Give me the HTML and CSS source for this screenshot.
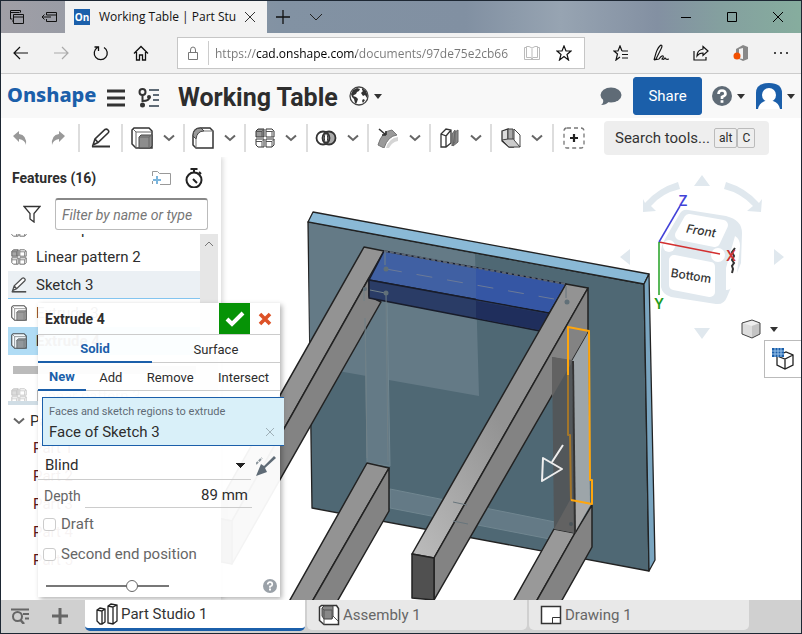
FILE: index.html
```
<!DOCTYPE html>
<html lang="en">
<head>
    <meta charset="UTF-8">
    <meta name="viewport" content="width=device-width, initial-scale=1.0">
    <title>Working Table | Part Studio 1</title>
    <link rel="stylesheet" href="styles.css">
</head>
<body>

    <!-- Shared icons -->
    <svg class="sprites" aria-hidden="true">
        <symbol id="chevron" viewBox="0 0 12 8"><path d="M1 1.500l5 4.500 5-4.500" fill="none" stroke="#666" stroke-width="2"/></symbol>
        <symbol id="caret" viewBox="0 0 8 5"><path d="M0 0h8L4 5z" fill="#333"/></symbol>
        <symbol id="extrude" viewBox="0 0 22 22">
            <path d="M1 3l2-2h15l3 3v17H5l-4-4z" fill="#fff" stroke="#333" stroke-width="1.500"/>
            <path d="M2 2l3 3h16M5 5v16" fill="none" stroke="#666"/>
            <path d="M8 10l2-2h11v11l-2 2H8z" fill="#8d8d8d" stroke="#444"/>
            <path d="M8 10h10v11M18 10l3-2" fill="none" stroke="#666"/>
        </symbol>
        <symbol id="pattern" viewBox="0 0 20 20">
            <path d="M1 3l2-2h6v8H1z" fill="#999" stroke="#333"/>
            <path d="M11 1h6l2 2v6h-8zM1 11h8v8H3l-2-2zM11 11h8v6l-2 2h-6z" fill="#fff" stroke="#333"/>
            <path d="M1 3.500h6V9M7 3.500L9 1M11 3.500h6V9M17 3.500l2-1M1 13.500h6V19M7 13.500l2-2M11 13.500h6V19M17 13.500l2-2" fill="none" stroke="#555"/>
        </symbol>
        <symbol id="pencil" viewBox="0 0 20 20">
            <path d="M2 17l2-6L14 1.500q1.500-1 3 .5t0 3L7 14.500zM4 11l3 3.500" fill="#fff" stroke="#333" stroke-width="1.600"/>
            <path d="M1 18.500h18" stroke="#333" stroke-width="2"/>
        </symbol>
    </svg>

    <div class="window">

        <!-- Browser tabs -->
        <div class="titlebar">
            <div class="tab-tools">
                <svg width="16" height="16" viewBox="0 0 16 16"><path d="M3.500 10H1.500V1.500h10v2M4.500 12H3M1.500 3.500h9M4.500 5.500h10v9h-10zM4.500 8h10" fill="none" stroke="#111"/></svg>
                <svg width="16" height="14" viewBox="0 0 16 14"><path d="M5.500 5V2.500h10v9h-10V9M5.500 5h10M10 7H1M3.500 4.500L1 7l2.500 2.500" fill="none" stroke="#111"/></svg>
            </div>
            <div class="browser-tab">
                <span class="favicon">On</span>
                <span class="browser-tab-title">Working Table | Part Stu</span>
                <button class="plain" aria-label="Close tab"><svg width="12" height="12" viewBox="0 0 12 12"><path d="M1 1l10 10M11 1L1 11" stroke="#333"/></svg></button>
            </div>
            <button class="plain new-tab" aria-label="New tab"><svg width="14" height="14" viewBox="0 0 14 14"><path d="M7 0v14M0 7h14" stroke="#111" stroke-width="1.300"/></svg></button>
            <button class="plain" aria-label="Tab list"><svg width="14" height="8" viewBox="0 0 14 8"><path d="M1 1l6 6 6-6" fill="none" stroke="#222"/></svg></button>
            <div class="window-buttons">
                <button class="plain" aria-label="Minimize"><svg width="12" height="12" viewBox="0 0 12 12"><path d="M1 6.500h10" stroke="#000"/></svg></button>
                <button class="plain" aria-label="Maximize"><svg width="12" height="12" viewBox="0 0 12 12"><path d="M1.500 1.500h9v9h-9z" fill="none" stroke="#000"/></svg></button>
                <button class="plain" aria-label="Close"><svg width="12" height="12" viewBox="0 0 12 12"><path d="M1 1l10 10M11 1L1 11" stroke="#000"/></svg></button>
            </div>
        </div>

        <!-- Address bar -->
        <div class="addressbar">
            <button class="plain nav" aria-label="Back"><svg width="16" height="14" viewBox="0 0 16 14"><path d="M15 7H1M7 1L1 7l6 6" fill="none" stroke="#111" stroke-width="1.200"/></svg></button>
            <button class="plain nav" aria-label="Forward"><svg width="16" height="14" viewBox="0 0 16 14"><path d="M1 7h14M9 1l6 6-6 6" fill="none" stroke="#aaa" stroke-width="1.200"/></svg></button>
            <button class="plain nav" aria-label="Refresh"><svg width="16" height="16" viewBox="0 0 16 16"><path d="M4.500 2.500a6.500 6.500 0 1 0 6.500 0M1.500 2h4v4" fill="none" stroke="#111" stroke-width="1.300"/></svg></button>
            <button class="plain nav" aria-label="Home"><svg width="16" height="16" viewBox="0 0 16 16"><path d="M1 8.500L8 1.500l7 7M3.500 7v8h3v-5h3v5h3V7" fill="none" stroke="#111" stroke-width="1.300"/></svg></button>
            <div class="url">
                <svg width="12" height="14" viewBox="0 0 12 14"><path d="M1.500 6.500h9v7h-9zM3.500 6.500V4q0-3 2.500-3t2.500 3v2.500" fill="none" stroke="#777"/></svg>
                <input type="text" aria-label="Address" value="https://cad.onshape.com/documents/97de75e2cb66">
                <svg width="16" height="14" viewBox="0 0 16 14"><path d="M8 2.500v11M5 .5H2.500v11H7l1 1.500 1-1.500h4.500V.5H11L8 2 5 .5zM2.500 1.500h-2v12h15v-12h-2" fill="none" stroke="#bbb"/></svg>
                <svg width="16" height="16" viewBox="0 0 16 16"><path d="M8 1l2 5h5l-4 3.500 1.500 5.500L8 11.500 3.500 15 5 9.500 1 6h5z" fill="none" stroke="#111" stroke-width="1.200"/></svg>
            </div>
            <div class="browser-actions">
                <svg width="16" height="16" viewBox="0 0 16 16"><path d="M9 6L7 1 5 6H1l3.500 3L3 15l4-3M9 6h6M9 9.500h6M9 13h6" fill="none" stroke="#111" stroke-width="1.200"/></svg>
                <svg width="16" height="18" viewBox="0 0 16 18"><path d="M1 16L3 9q2-6 5-8 2 0 0 4L3 15l-2 1 5-1q3-4 4-3t-1 3q2 1 3-1 1 2 4 1" fill="none" stroke="#111" stroke-width="1.100"/></svg>
                <svg width="16" height="16" viewBox="0 0 16 16"><path d="M1 6v9h12v-3M10 1.500L15 6l-5 4.500V8q-4 0-6 3 0-6 6-7z" fill="none" stroke="#111" stroke-width="1.200"/></svg>
                <svg width="16" height="18" viewBox="0 0 16 18"><path d="M3 5l7-4 5 2v12l-5 2-6-3 6 1V4L6 5v5H3z" fill="#888"/><circle cx="4" cy="12" r="3.500" fill="#f25000"/></svg>
                <svg width="16" height="4" viewBox="0 0 16 4"><path d="M1 2h2M7 2h2M13 2h2" stroke="#111" stroke-width="1.600"/></svg>
            </div>
        </div>

        <!-- Document header -->
        <header class="header">
            <a href="#" class="logo">Onshape</a>
            <button class="plain menu" aria-label="Menu"><svg width="18" height="18" viewBox="0 0 18 18"><path d="M0 2h18M0 9h18M0 16h18" stroke="#333" stroke-width="3"/></svg></button>
            <button class="plain versions" aria-label="Versions"><svg width="22" height="20" viewBox="0 0 22 20"><g fill="none" stroke="#333" stroke-width="2"><circle cx="4.500" cy="4" r="3"/><path d="M4.500 7v7M4.500 13q7 0 7-4"/></g><circle cx="4.500" cy="17" r="2.500" fill="#333"/><circle cx="11" cy="9" r="2" fill="#333"/><path d="M11 2h10M15 7h6M15 12h6M11 18h10" stroke="#5f6b76" stroke-width="2"/></svg></button>
            <h1>Working Table</h1>
            <svg width="20" height="20" viewBox="0 0 20 20"><circle cx="10" cy="10" r="9" fill="#fff" stroke="#444" stroke-width="1.300"/><path d="M4 4l4-2 3 1-1 2-2 1-1 2-2 1-1 1 3 1 2 2-1 3-1 2-1-1-1-4-2-2-1-3zM13 2l4 3 1.500 4-.5 3-2-3-2 1-2-3 2-2-1-1zM14 13l2 1-2 3-1-2z" fill="#333"/></svg>
            <svg class="caret" width="8" height="5"><use href="#caret"/></svg>
            <div class="header-right">
                <svg width="22" height="20" viewBox="0 0 22 20"><ellipse cx="11" cy="9" rx="10.500" ry="7.500" fill="#5f6b76"/><path d="M3 13q1 4-2 6 6 0 8-4z" fill="#5f6b76"/></svg>
                <button class="share">Share</button>
                <button class="plain help" aria-label="Help"><svg width="20" height="20" viewBox="0 0 20 20"><circle cx="10" cy="10" r="10" fill="#5f6b76"/><path d="M6.500 8q0-3.500 3.500-3.500T13.500 8Q13.500 9.500 10 11v2" fill="none" stroke="#fff" stroke-width="2.600"/><path d="M8.600 14.200h2.800v2.600H8.600z" fill="#fff"/></svg><svg width="8" height="5"><use href="#caret"/></svg></button>
                <button class="plain account" aria-label="Account"><svg width="26" height="26" viewBox="0 0 26 26"><path d="M0 26V10Q0 0 13 0t13 10v16z" fill="#1b5faa"/><circle cx="13" cy="12" r="7" fill="#fff"/><path d="M2 26q1-6 7-8h8q6 2 7 8z" fill="#fff"/></svg><svg width="8" height="5"><use href="#caret"/></svg></button>
            </div>
        </header>

        <!-- Tools -->
        <div class="toolbar">
            <button class="plain tool-small" aria-label="Undo"><svg width="16" height="16" viewBox="0 0 16 16"><path d="M1 6l6-5v3q8 1 7 11-1-5-7-6v3z" fill="#999"/></svg></button>
            <button class="plain tool-small" aria-label="Redo"><svg width="16" height="16" viewBox="0 0 16 16"><path d="M15 6L9 1v3Q1 5 2 15q1-5 7-6v3z" fill="#999"/></svg></button>
            <button class="plain tool-pencil" aria-label="Sketch"><svg width="20" height="20"><use href="#pencil"/></svg></button>
            <div class="tool-groups">
                <button class="plain" aria-label="Extrude"><svg width="22" height="22"><use href="#extrude"/></svg><svg width="12" height="8"><use href="#chevron"/></svg></button>
                <button class="plain" aria-label="Fillet"><svg width="22" height="22" viewBox="0 0 22 22"><path d="M1 18V9q0-8 8-8h9l3 3v17H4z" fill="#fff" stroke="#333" stroke-width="1.500"/><path d="M1 9q0-8 8-8l3 3q-7 0-8 8z" fill="#999" stroke="#444"/><path d="M12 4h9M4 11v10" stroke="#777"/></svg><svg width="12" height="8"><use href="#chevron"/></svg></button>
                <button class="plain" aria-label="Pattern"><svg width="20" height="20"><use href="#pattern"/></svg><svg width="12" height="8"><use href="#chevron"/></svg></button>
                <button class="plain" aria-label="Boolean"><svg width="22" height="16" viewBox="0 0 22 16"><circle cx="14" cy="8" r="6.500" fill="#aaa" stroke="#333" stroke-width="1.800"/><circle cx="8" cy="8" r="6.500" fill="none" stroke="#333" stroke-width="1.800"/><path d="M11 2.500q-3.500 5.500 0 11 3.500-5.500 0-11" fill="#fff" stroke="#333"/></svg><svg width="12" height="8"><use href="#chevron"/></svg></button>
                <button class="plain" aria-label="Modify surface"><svg width="22" height="20" viewBox="0 0 22 20"><path d="M1 17q4-14 14-15l5 5q-9 1-13 13z" fill="#999" stroke="#777"/><path d="M9 20q3-10 12-11v4q-6 1-9 7z" fill="#d5d5d5"/><path d="M2 1l7 6M9 7V3M9 7H5" stroke="#333" stroke-width="1.600"/></svg><svg width="12" height="8"><use href="#chevron"/></svg></button>
                <button class="plain" aria-label="Split"><svg width="20" height="20" viewBox="0 0 20 20"><path d="M1 6l5-5 5 1v13l-5 4H1zM1 6l5 2v11M6 8l5-6" fill="#fff" stroke="#333" stroke-width="1.300"/><path d="M12 6l3-4v12l-3 4zM15 4l3-2v12l-5 4z" fill="#888" stroke="#666"/></svg><svg width="12" height="8"><use href="#chevron"/></svg></button>
                <button class="plain" aria-label="Plane"><svg width="20" height="20" viewBox="0 0 20 20"><path d="M1 3l6-2v12l5 6H8l-7-6z" fill="#ddd" stroke="#333" stroke-width="1.300"/><path d="M7 1h5v12H7z" fill="#aaa" stroke="#444"/><path d="M1 12l6-1h7l5 8H8z" fill="#ccc" stroke="#444"/><path d="M13 1l6 6v12l-6-7z" fill="#fff" stroke="#444"/></svg><svg width="12" height="8"><use href="#chevron"/></svg></button>
            </div>
            <button class="plain tool-add" aria-label="Add custom features"><svg width="22" height="22" viewBox="0 0 22 22"><rect x="1" y="1" width="20" height="20" rx="3" fill="none" stroke="#777" stroke-width="1.300" stroke-dasharray="4 3"/><path d="M11 7v8M7 11h8" stroke="#222" stroke-width="2.200"/></svg></button>
            <label class="tool-search">
                <input type="text" placeholder="Search tools..." aria-label="Search tools">
                <kbd>alt</kbd><kbd>C</kbd>
            </label>
        </div>

        <main class="workspace">

            <!-- 3D model -->
            <svg class="model" viewBox="1 157 800 443" preserveAspectRatio="xMinYMin meet" stroke-linejoin="round">
                <defs>
                    <linearGradient id="legShade" x1="1" y1="0" x2="0" y2="1"><stop offset=".5" stop-color="#939393"/><stop offset="1" stop-color="#bcbcbc"/></linearGradient>
                </defs>
                <g stroke="#222" stroke-width="1.300">
                    <path d="M308 222L644 284 649 571 312 508z" fill="#4f6874"/>
                    <path d="M308 222l5-10 336 62-5 10z" fill="#8ab9d6"/>
                    <path d="M644 284l5-10 6 286-6 11z" fill="#7aa5c0"/>
                </g>
                <path d="M309 223L475 254 479 396 310 366z" fill="#647a86"/>
                <path d="M365 300h22l3 166-23-3zM390 489l170 34v18L390 508z" fill="#647a86" stroke="#708690"/>

                <!-- Left legs -->
                <g stroke="#222" stroke-width="1.500">
                    <path d="M364 247l20 4L232 521l-21-4z" fill="#939393"/>
                    <path d="M369 278v18l12 6L232 564v-43z" fill="#838383"/>
                    <path d="M211 517l21 4v43l-21-4z" fill="#505050"/>
                    <path d="M367 463l22 5-80 139h-23z" fill="#939393"/>
                    <path d="M389 468v43l-55 96h-25z" fill="#838383"/>
                </g>

                <!-- Crossbar -->
                <g stroke="#181c2a" stroke-width="1.500">
                    <path d="M384 251L566 284 549 313 369 280z" fill="#4060a3"/>
                    <path d="M369 280L549 313 540 331 369 298z" fill="#2a3c66"/>
                </g>
                <path d="M476 268l89 17-16 27-73-13z" fill="#3556a4"/>
                <path d="M476 301l72 13-8 16-64-12z" fill="#1f2e5c"/>
                <path d="M386 269l168 30" stroke="#6b7a98" stroke-dasharray="16 15"/>
                <path d="M384 251L566 284" stroke="#5c6572" stroke-width="2" stroke-dasharray="4 2"/>
                <path d="M385 252v13M370 290l15 3M364 289v12M386 294l2 168M365 318l2 140" fill="none" stroke="#708087"/>
                <g fill="#617078"><circle cx="386" cy="269" r="2.500"/><circle cx="386" cy="293" r="2.500"/><circle cx="365" cy="289" r="2"/></g>

                <!-- Front leg -->
                <g stroke="#222" stroke-width="1.500">
                    <path d="M566 284l22 4-154 270-22-4z" fill="url(#legShade)"/>
                    <path d="M588 288v45L434 600v-42z" fill="#838383"/>
                    <path d="M412 554l22 4v42l-22-2z" fill="#505050"/>
                </g>
                <path d="M566 286v12M453 502l14 3M453 521l15 3" stroke="#68757c"/>
                <circle cx="567" cy="302" r="2.500" fill="#617078"/>

                <!-- Back right leg and selected face -->
                <g stroke="#222" stroke-width="1.500">
                    <path d="M554 529l21 4-43 76h-23z" fill="#999"/>
                    <path d="M575 533l17-28v42l-35 62h-25z" fill="#838383"/>
                </g>
                <path d="M572 361l16-28 2 170-17-2z" fill="#9da5a9"/>
                <path d="M574 501l17 3-16 28z" fill="#aaa"/>
                <path d="M552 357l20 4 3 172-21-4z" fill="#52575a"/>
                <path d="M552 357l20 3-1 4-19 33z" fill="#626262"/>
                <path d="M570 500l5 1v32l-21-4z" fill="#626262"/>
                <path d="M573 361l2 172" stroke="#333" stroke-width="2"/>
                <circle cx="571" cy="524" r="2" fill="#4c555a"/>
                <path d="M568 375v60h2l1 65" fill="none" stroke="#a2752a" stroke-width="2"/>
                <path d="M568 375v-48l21 4 1 149h2v24l-21-4" fill="none" stroke="#ffa60d" stroke-width="2"/>
                <path d="M543 458l19 11-20 12zM552 462l11-17" fill="none" stroke="#eee" stroke-width="2"/>
            </svg>

            <!-- View controls -->
            <div class="view-controls">
                <svg width="174" height="170" viewBox="615 172 174 170">
                    <g fill="#e0e8ee">
                        <path d="M702 175l8 11h-16zM702 339l8-11h-16zM620 257l10-8v16zM784 257l-10-8v16z"/>
                        <path d="M643 199l2 4q13-15 33-21l2 7q-18 4-29 17l5 5-13 1zM762 199l-3 4q-13-15-33-21l-2 7q17 4 29 17l-6 5 14 1z"/>
                        <path d="M688 210l38 6q16 4 16 17l-1 30-14 34q-3 8-11 7l-45-7q-9-3-10-10v-35q0-6 4-13l14-24q3-6 9-5z"/>
                    </g>
                    <g fill="#fff" stroke="#fff" stroke-width="10" stroke-linejoin="round">
                        <path d="M689 219l34 6-8 17-35-7z"/>
                        <path d="M674 260l36 7v25l-36-7z"/>
                    </g>
                    <path d="M735 236q5 3 5 10l-4 36q-5 9-10 8v-22z" fill="#fff"/>
                    <circle cx="669" cy="246" r="6" fill="#fff"/><circle cx="718" cy="255" r="7" fill="#fff"/>
                    <path d="M727 301l12-14-3 10q-2 6-9 4z" fill="#fff"/>
                    <g class="cube-text">
                        <text x="701" y="235" transform="rotate(9 701 231)" font-style="italic">Front</text>
                        <text x="691" y="280" transform="rotate(9 691 276)">Bottom</text>
                    </g>
                    <path d="M735 248l-3 4 2 4-2 4 2 3-2 3 1 3-1 4" fill="none" stroke="#333" stroke-width="2"/>
                    <path d="M659 242l61 12" stroke="#d32f2f" stroke-width="1.500"/>
                    <path d="M659 242l21-36" stroke="#4242d8" stroke-width="1.500"/>
                    <path d="M659 242v53" stroke="#22a022" stroke-width="1.500"/>
                    <g class="axis-text">
                        <text x="731" y="261" fill="#c33">X</text>
                        <text x="659" y="309" fill="#1b9a1b">Y</text>
                        <text x="683" y="206" fill="#4242d8">Z</text>
                    </g>
                </svg>
                <button class="plain shading" aria-label="Shading">
                    <svg width="20" height="20" viewBox="0 0 20 20"><path d="M1 4l10-3 8 3v11l-8 4-10-4z" fill="#ddd"/><path d="M1 4l10 3 8-3-8-3z" fill="#eee"/><path d="M11 7l8-3v11l-8 4z" fill="#c4c4c4"/><path d="M1 4l10-3 8 3v11l-8 4-10-4z" fill="none" stroke="#444"/></svg>
                    <svg width="8" height="5"><use href="#caret"/></svg>
                </button>
                <button class="tables" aria-label="Tables">
                    <svg width="22" height="22" viewBox="0 0 22 22"><path d="M5 8l9-4 7 3v10l-8 4-8-4zM5 8l8 3 8-4M13 11v10" fill="#fff" stroke="#222" stroke-width="1.300"/><path d="M0 0h12v9H0z" fill="#1b5faa"/><path d="M0 3h12M0 6h12M3 0v9M6 0v9M9 0v9" stroke="#9cc4ea"/></svg>
                </button>
            </div>

            <!-- Feature list -->
            <aside class="features">
                <div class="features-head">
                    <h2>Features (16)</h2>
                    <svg width="20" height="16" viewBox="0 0 20 16"><path d="M1.500 6V1.500h5l2 2h11v11H9M1.500 11v3" fill="none" stroke="#999"/><path d="M6 6v8M2 10h8" stroke="#7bb5dc" stroke-width="2"/></svg>
                    <svg width="18" height="20" viewBox="0 0 18 20"><circle cx="9" cy="12" r="7.500" fill="none" stroke="#222" stroke-width="2"/><path d="M5.500 1h7M9 1v3M12 15l-4-4M14 4l2 2" stroke="#222" stroke-width="2"/></svg>
                </div>
                <div class="filter">
                    <svg width="18" height="18" viewBox="0 0 18 18"><path d="M1 1.500h16l-6 7V17l-4-3V8.500z" fill="none" stroke="#333" stroke-width="1.300"/></svg>
                    <input type="text" placeholder="Filter by name or type" aria-label="Filter by name or type">
                </div>
                <div class="list-wrapper">
                    <ul class="feature-list">
                        <li><svg width="16" height="16"><use href="#pattern"/></svg>Linear pattern 1</li>
                        <li><svg width="16" height="16"><use href="#pattern"/></svg>Linear pattern 2</li>
                        <li class="sketch"><svg width="16" height="16"><use href="#pencil"/></svg>Sketch 3</li>
                        <li><svg width="16" height="16"><use href="#extrude"/></svg>Extrude 3</li>
                        <li class="active"><svg width="16" height="16"><use href="#extrude"/></svg><b>Extrude 4</b></li>
                        <li class="rollback"></li>
                        <li class="suppressed"><svg width="16" height="16"><use href="#pattern"/></svg>Linear pattern 3</li>
                    </ul>
                    <div class="scrollbar"><svg width="10" height="6" viewBox="0 0 10 6"><path d="M1 5l4-4 4 4" fill="none" stroke="#777"/></svg></div>
                </div>
                <h3><svg width="12" height="8"><use href="#chevron"/></svg>Parts (5)</h3>
                <ul class="parts">
                    <li>Part 1</li>
                    <li>Part 2</li>
                    <li>Part 3</li>
                    <li>Part 4</li>
                    <li>Part 5</li>
                </ul>
            </aside>

            <!-- Extrude dialog -->
            <form class="dialog" action="#">
                <div class="dialog-head">
                    <h2>Extrude 4</h2>
                    <button type="button" class="accept" aria-label="Accept"><svg width="20" height="16" viewBox="0 0 20 16"><path d="M2 8l5 5L18 2" fill="none" stroke="#fff" stroke-width="4"/></svg></button>
                    <button type="button" class="plain cancel" aria-label="Cancel"><svg width="14" height="14" viewBox="0 0 14 14"><path d="M2 2l10 10M12 2L2 12" stroke="#dd5227" stroke-width="3.600"/></svg></button>
                </div>
                <div class="type-tabs">
                    <button type="button" class="selected">Solid</button>
                    <button type="button">Surface</button>
                </div>
                <div class="operation-tabs">
                    <button type="button" class="selected">New</button>
                    <button type="button">Add</button>
                    <button type="button">Remove</button>
                    <button type="button">Intersect</button>
                </div>
                <div class="selection">
                    <small>Faces and sketch regions to extrude</small>
                    <p>Face of Sketch 3 <button type="button" class="plain" aria-label="Remove face"><svg width="8" height="8" viewBox="0 0 8 8"><path d="M0 0l8 8M8 0L0 8" stroke="#9fb0b8"/></svg></button></p>
                </div>
                <div class="row">
                    <select class="end-type" aria-label="End type"><option>Blind</option></select>
                    <button type="button" class="plain" aria-label="Flip direction"><svg width="20" height="20" viewBox="0 0 20 20"><path d="M0 20l5-12 3 2 10-10 2 2L9 12l2 4z" fill="#5f6b76"/><path d="M0 8l6-6" stroke="#8b959c" stroke-width="2" stroke-dasharray="3 1"/></svg></button>
                </div>
                <div class="row depth">
                    <label for="depth">Depth</label>
                    <input type="text" id="depth" value="89 mm">
                </div>
                <label class="check"><input type="checkbox"> Draft</label>
                <label class="check"><input type="checkbox"> Second end position</label>
                <div class="opacity-row">
                    <input type="range" min="0" max="100" value="72" aria-label="Dialog opacity">
                    <button type="button" class="plain" aria-label="Help"><svg width="14" height="14" viewBox="0 0 14 14"><circle cx="7" cy="7" r="7" fill="#9aa1a8"/><path d="M4.700 5.500q0-2.300 2.300-2.300t2.300 2.300Q9.300 6.800 7 7.500v1.200" fill="none" stroke="#fff" stroke-width="1.700"/><path d="M6 9.600h2v1.900H6z" fill="#fff"/></svg></button>
                </div>
            </form>
        </main>

        <!-- Document tabs -->
        <nav class="doc-tabs">
            <button class="plain tab-manager" aria-label="Tab manager"><svg width="18" height="16" viewBox="0 0 18 16"><path d="M0 1.500h18M12 6h6M14 10.500h4" stroke="#666" stroke-width="2"/><circle cx="6.500" cy="8.500" r="4.500" fill="none" stroke="#666" stroke-width="2"/><path d="M9.500 12l3.500 4" stroke="#666" stroke-width="2.500"/></svg></button>
            <button class="plain add-tab" aria-label="Add tab"><svg width="16" height="16" viewBox="0 0 16 16"><path d="M8 0v16M0 8h16" stroke="#666" stroke-width="3"/></svg></button>
            <a href="#" class="doc-tab current"><svg width="22" height="22" viewBox="0 0 22 22"><path d="M1 7l3-2 5 1v13l-3 2H4l-3-3zM1 7l5 1v13M6 8l3-2M12 3l3-2 6 1v16l-4 3-5-1zM12 3l5 1v17M17 4l4-2" fill="#fff" stroke="#222" stroke-width="1.300"/></svg>Part Studio 1</a>
            <a href="#" class="doc-tab"><svg width="22" height="22" viewBox="0 0 22 22"><path d="M1.500 3l2-1.500h15l2 3v16H6l-4.500-4z" fill="#fff" stroke="#333" stroke-width="1.500"/><path d="M4 4l2-2h9v10l-1 3H6l-2-3z" fill="#888" stroke="#444"/><path d="M4 4l2 2h8v9M6 6v15M15 12l5 5" fill="none" stroke="#555"/></svg>Assembly 1</a>
            <a href="#" class="doc-tab"><svg width="22" height="20" viewBox="0 0 22 20"><path d="M1.500 1.500h19v17h-19z" fill="#fff" stroke="#333" stroke-width="1.500"/><path d="M12.500 18v-5.500h8" fill="none" stroke="#333"/></svg>Drawing 1</a>
        </nav>
    </div>

</body>
</html>
```
FILE: styles.css
```
* {
    box-sizing: border-box;
}

body, h1, h2, h3, ul, p {
    margin: 0;
    padding: 0;
}

body {
    font-family: Roboto, sans-serif;
    font-size: 15px;
    line-height: 20px;
    color: #2d2d2d;
}

svg {
    display: block;
    flex: none;
}

button, input, select, kbd {
    font-family: inherit;
    font-size: inherit;
    color: inherit;
}

button {
    cursor: pointer;
}

ul {
    list-style: none;
}

a {
    text-decoration: none;
}

.plain {
    display: flex;
    align-items: center;
    justify-content: center;
    padding: 0;
    border: none;
    background: none;
}

.sprites {
    position: absolute;
    width: 0;
    height: 0;
}

.window {
    display: flex;
    flex-direction: column;
    height: 100vh;
    border: 1px solid #1d2733;
    background: #fff;
    overflow: hidden;
}

/* Browser tabs */
.titlebar {
    display: flex;
    flex: none;
    align-items: center;
    height: 32px;
    background: linear-gradient(90deg, #a09fa6, #8292a3 35%, #8190a2 58%, #97a4b2 70%, #8390a2 82%, #84a09f 90%, #86ad9e);
}

.tab-tools {
    display: flex;
    align-items: center;
    gap: 16px;
    width: 64px;
    padding-left: 8px;
}

.browser-tab {
    display: flex;
    align-items: center;
    width: 202px;
    height: 100%;
    padding: 0 11px 0 9px;
    background: #f2f2f2;
    font-family: "Open Sans", sans-serif;
    font-size: 12px;
    color: #111;
}

.browser-tab-title {
    flex: 1;
    margin-left: 9px;
    white-space: nowrap;
}

.favicon {
    width: 16px;
    height: 16px;
    background: #1b5faa;
    color: #fff;
    font-size: 10px;
    font-weight: bold;
    line-height: 17px;
    text-align: center;
}

.new-tab {
    width: 32px;
    margin-right: 10px;
}

.window-buttons {
    display: flex;
    margin-left: auto;
}

.window-buttons button {
    width: 46px;
}

/* Address bar */
.addressbar {
    display: flex;
    flex: none;
    align-items: center;
    height: 41px;
    background: #f2f2f2;
    border-bottom: 1px solid #ccc;
}

.nav {
    width: 40px;
}

.url {
    display: flex;
    align-items: center;
    flex: 1;
    gap: 16px;
    height: 32px;
    margin-left: 16px;
    padding: 0 12px 0 9px;
    border: 1px solid #c6c6c6;
    background: #fff;
}

.url input {
    flex: 1;
    min-width: 0;
    height: 24px;
    margin-left: -7px;
    padding: 0 0 0 6px;
    border: none;
    border-left: 1px solid #ccc;
    outline: none;
    font-family: "Open Sans", sans-serif;
    font-size: 12px;
    color: transparent;
    background: linear-gradient(90deg, #777 47px, #000 47px, #000 147px, #777 147px);
    background-clip: text;
    -webkit-background-clip: text;
}

.browser-actions {
    display: flex;
    align-items: center;
    gap: 24px;
    padding: 0 12px 0 28px;
}

/* Document header */
.header {
    display: flex;
    flex: none;
    align-items: center;
    height: 44px;
    padding: 0 6px;
    background: #f8f8f8;
}

.logo {
    width: 88px;
    margin-bottom: 3px;
    color: #1b5faa;
    font-family: "Noto Sans", sans-serif;
    font-size: 20px;
    font-weight: 800;
}

.menu {
    margin: 4px 13px 0 12px;
}

.versions {
    margin-top: 4px;
}

h1 {
    margin: 4px 11px 0 18px;
    font-size: 25px;
    line-height: 28px;
    white-space: nowrap;
}

.header .caret {
    margin-left: 5px;
}

.header-right {
    display: flex;
    align-items: center;
    margin-left: auto;
}

.share {
    width: 69px;
    height: 38px;
    margin: 0 10px 0 11px;
    border: 1px solid #1b5faa;
    border-radius: 3px;
    background: #1b5faa;
    color: #fff;
}

.help {
    gap: 5px;
    margin-right: 11px;
}

.account {
    gap: 5px;
}

/* Tools */
.toolbar {
    display: flex;
    flex: none;
    align-items: center;
    height: 39px;
    background: #fff;
}

.tool-small {
    width: 38px;
}

.tool-pencil {
    width: 43px;
    height: 28px;
    margin-left: 1px;
    border-left: 2px solid #ddd;
}

.tool-groups {
    display: grid;
    grid-template-columns: repeat(7, 1fr);
    width: 431px;
}

.tool-groups button {
    height: 28px;
    gap: 10px;
    border-left: 2px solid #ddd;
}

.tool-add {
    width: 42px;
    height: 28px;
    border-left: 2px solid #ddd;
}

.tool-search {
    display: flex;
    align-items: center;
    width: 165px;
    height: 34px;
    margin-left: 10px;
    padding-left: 11px;
    border-radius: 4px;
    background: #eee;
}

.tool-search input {
    width: 99px;
    padding: 0;
    border: none;
    background: none;
    outline: none;
}

.tool-search input::placeholder {
    color: #333;
}

kbd {
    height: 20px;
    padding: 0 4px;
    border: 1px solid #bbb;
    border-radius: 2px;
    font-size: 12px;
    line-height: 18px;
}

/* Model area */
.workspace {
    position: relative;
    flex: 1;
    min-height: 0;
    overflow: hidden;
}

.model {
    position: absolute;
    width: 100%;
    height: 100%;
}

.view-controls {
    position: absolute;
    top: 15px;
    right: 0;
    display: flex;
    flex-direction: column;
    align-items: flex-end;
}

.view-controls > svg {
    margin-right: 12px;
}

.cube-text {
    font-family: Inter, sans-serif;
    font-size: 12px;
    font-weight: 500;
    text-anchor: middle;
    fill: #333;
}

.axis-text {
    font-family: Inter, sans-serif;
    font-size: 14px;
    font-weight: 600;
    text-anchor: middle;
}

.shading {
    gap: 9px;
    margin: -23px 23px 0 0;
}

.tables {
    display: flex;
    align-items: center;
    width: 37px;
    height: 38px;
    margin-top: 1px;
    padding: 0 7px;
    border: 1px solid #bbb;
    border-right: none;
    background: #fff;
}

/* Feature list */
.features {
    position: relative;
    width: 220px;
    height: 100%;
    padding-left: 7px;
    background: rgba(255, 255, 255, 0.95);
    box-shadow: 2px 0 5px rgba(0, 0, 0, 0.15);
}

.features-head {
    display: flex;
    align-items: center;
    gap: 14px;
    height: 38px;
    padding: 4px 18px 0 4px;
}

h2 {
    flex: 1;
    font-size: 14px;
    font-weight: bold;
}

.filter {
    display: flex;
    align-items: center;
    gap: 14px;
    height: 38px;
    padding-left: 15px;
}

.filter input {
    width: 153px;
    height: 32px;
    padding: 0 6px;
    border: 1px solid #bbb;
    border-top: 2px solid #888;
    border-radius: 3px;
    font-style: italic;
    font-size: 14px;
}

.filter input::placeholder {
    color: #777;
}

.list-wrapper {
    display: flex;
    width: 210px;
    height: 171px;
    margin-top: 1px;
    border-bottom: 4px solid #d0dde5;
    overflow: hidden;
}

.feature-list {
    flex: 1;
    margin-top: -19px;
}

.feature-list li {
    display: flex;
    align-items: center;
    gap: 9px;
    height: 28px;
    padding-left: 3px;
    white-space: nowrap;
}

.feature-list svg {
    opacity: 0.85;
}

.feature-list .sketch {
    background: #ebf0f4;
    border-bottom: 1px solid #83c5f0;
}

.feature-list .active {
    background: #b0dcf5;
}

.feature-list .rollback {
    height: 8px;
    margin: 11px 4px 8px 5px;
    background: #bbb;
}

.feature-list .suppressed {
    opacity: 0.4;
}

.scrollbar {
    width: 18px;
    padding: 7px 4px;
    background: #e6e6e6;
}

h3 {
    display: flex;
    align-items: center;
    gap: 5px;
    height: 29px;
    padding: 3px 0 0 5px;
    font-size: 15px;
    font-weight: normal;
}

.parts {
    padding-left: 25px;
    color: #5c1a1a;
    line-height: 28px;
}

/* Extrude dialog */
.dialog {
    position: absolute;
    top: 146px;
    left: 37px;
    width: 242px;
    background: rgba(255, 255, 255, 0.95);
    box-shadow: 2px 2px 5px rgba(0, 0, 0, 0.3);
}

.dialog-head {
    display: flex;
    align-items: center;
    height: 32px;
    padding-left: 7px;
    border-bottom: 1px solid #ccc;
}

.accept {
    display: flex;
    align-items: center;
    justify-content: center;
    width: 31px;
    height: 31px;
    padding: 0;
    border: none;
    background: #069306;
}

.cancel {
    width: 30px;
}

.type-tabs, .operation-tabs {
    display: flex;
    height: 28px;
    border-bottom: 1px solid #ccc;
}

.type-tabs button, .operation-tabs button {
    height: 28px;
    padding: 0 11px;
    border: none;
    background: none;
    font-size: 13px;
}

.type-tabs {
    display: grid;
    grid-template-columns: 8fr 9fr;
}

.operation-tabs {
    justify-content: space-between;
}

.type-tabs .selected, .operation-tabs .selected {
    border-bottom: 2px solid #1b5faa;
    color: #1b5faa;
    font-weight: bold;
}

.selection {
    width: 242px;
    height: 49px;
    margin: 6px 0 5px 4px;
    padding: 4px 10px 0 6px;
    border: 1px solid #1b5faa;
    border-right: none;
    background: #d9f0f9;
}

.selection small {
    display: block;
    font-size: 11px;
    color: #5f6b76;
}

.selection p {
    display: flex;
    align-items: center;
    justify-content: space-between;
}

.row {
    display: flex;
    align-items: center;
    height: 29px;
    padding-right: 4px;
}

.end-type {
    width: 214px;
    height: 28px;
    margin-right: 5px;
    padding: 0 7px;
    border: none;
    border-bottom: 1px solid #ccc;
    appearance: none;
    background: conic-gradient(from -45deg at 50% 100%, #222 90deg, transparent 90deg) 198px 11px / 10px 5px no-repeat;
}

.depth {
    padding: 2px 28px 0 6px;
    color: #666;
    font-size: 14px;
}

.depth input {
    flex: 1;
    min-width: 0;
    height: 24px;
    margin-left: 4px;
    padding: 0 4px;
    border: none;
    border-bottom: 1px solid #ccc;
    background: none;
    color: #2d2d2d;
    font-size: 15px;
    text-align: right;
}

.check {
    display: flex;
    align-items: center;
    gap: 5px;
    height: 30px;
    padding-left: 5px;
    color: #666;
}

.check input {
    appearance: none;
    width: 13px;
    height: 13px;
    margin: 0;
    border: 1px solid #ccc;
    border-radius: 3px;
    background: #fff;
}

.opacity-row {
    display: flex;
    align-items: center;
    justify-content: space-between;
    height: 28px;
    padding: 6px 3px 0 8px;
}

input[type="range"] {
    appearance: none;
    width: 123px;
    height: 12px;
    margin: 0;
    background: linear-gradient(#777, #777) center / 100% 2px no-repeat;
}

input[type="range"]::-webkit-slider-thumb {
    appearance: none;
    width: 12px;
    height: 12px;
    border: 1px solid #666;
    border-radius: 50%;
    background: #fff;
}

/* Document tabs */
.doc-tabs {
    display: flex;
    flex: none;
    height: 33px;
    background: #d0d0d0;
}

.tab-manager {
    width: 38px;
    padding-bottom: 2px;
}

.add-tab {
    width: 42px;
    margin-right: 4px;
    padding-bottom: 2px;
}

.doc-tab {
    display: flex;
    align-items: center;
    gap: 3px;
    width: 220px;
    height: 30px;
    margin-right: 2px;
    padding-left: 11px;
    border-radius: 0 0 5px 5px;
    background: #e8e8e8;
    color: #666;
}

.doc-tab.current {
    height: 31px;
    border-bottom: 3px solid #1b5faa;
    background: #fff;
    color: #333;
}
```
